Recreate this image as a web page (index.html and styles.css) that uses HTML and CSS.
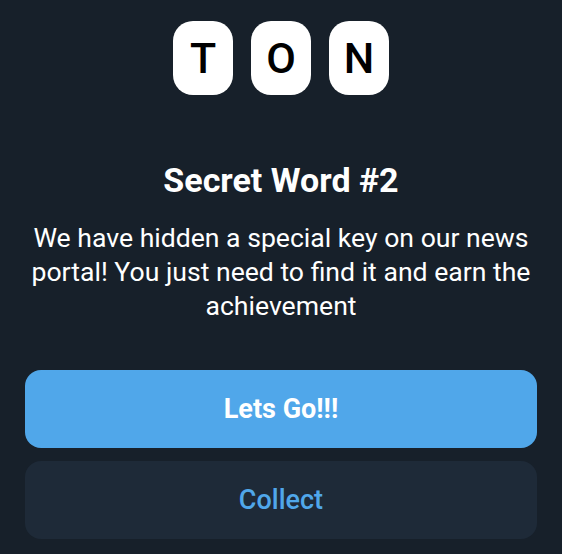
FILE: index.html
```html
<!DOCTYPE html>
<html lang="en">
<head>
  <meta charset="UTF-8">
  <meta name="viewport" content="width=device-width, initial-scale=1.0">
  <title>Secret Word</title>
  <link rel="stylesheet" href="styles.css">
</head>
<body>
  <div class="container">
    <div class="letters">
      <div class="letter">T</div>
      <div class="letter">O</div>
      <div class="letter">N</div>
    </div>
    <h1>Secret Word #2</h1>
    <p class="desc">We have hidden a special key on our news portal! You just need to find it and earn the achievement</p>
    <button class="btn btn-primary">Lets Go!!!</button>
    <button class="btn btn-secondary">Collect</button>
  </div>
</body>
</html>
```
FILE: styles.css
```css
:root {
  --bg-color: #17202a;
  --btn-color: #50a7ea;
  --btn-dark-color: #1e2a38;
}

body {
  font-family: Roboto, sans-serif;
  background-color: var(--bg-color);
  color: #fff;
  margin: 0;
  padding: 0;
}

.container {
  padding: 21px 25px 0;
  display: flex;
  flex-direction: column;
  align-items: center;
}

.letters {
  display: flex;
  gap: 18px;
}

.letter {
  width: 60px;
  height: 74px;
  background-color: #fff;
  color: #000;
  border-radius: 20px;
  display: flex;
  align-items: center;
  justify-content: center;
  font-family: Roboto, sans-serif;
  font-size: 43px;
  font-weight: 500;
}

h1 {
  font-size: 34px;
  font-weight: bold;
  margin: 65px 0 0;
  line-height: 40px;
}

.desc {
  font-size: 26.6px;
  line-height: 34px;
  text-align: center;
  margin: 21px -15px 47px;
}

.btn {
  display: block;
  width: 100%;
  height: 78px;
  border: none;
  border-radius: 16px;
  font-family: Roboto, sans-serif;
  font-size: 27px;
  cursor: pointer;
}

.btn-primary {
  background-color: var(--btn-color);
  color: #fff;
  font-weight: bold;
  margin-bottom: 13px;
}

.btn-secondary {
  background-color: var(--btn-dark-color);
  color: var(--btn-color);
  font-weight: 500;
}
```
